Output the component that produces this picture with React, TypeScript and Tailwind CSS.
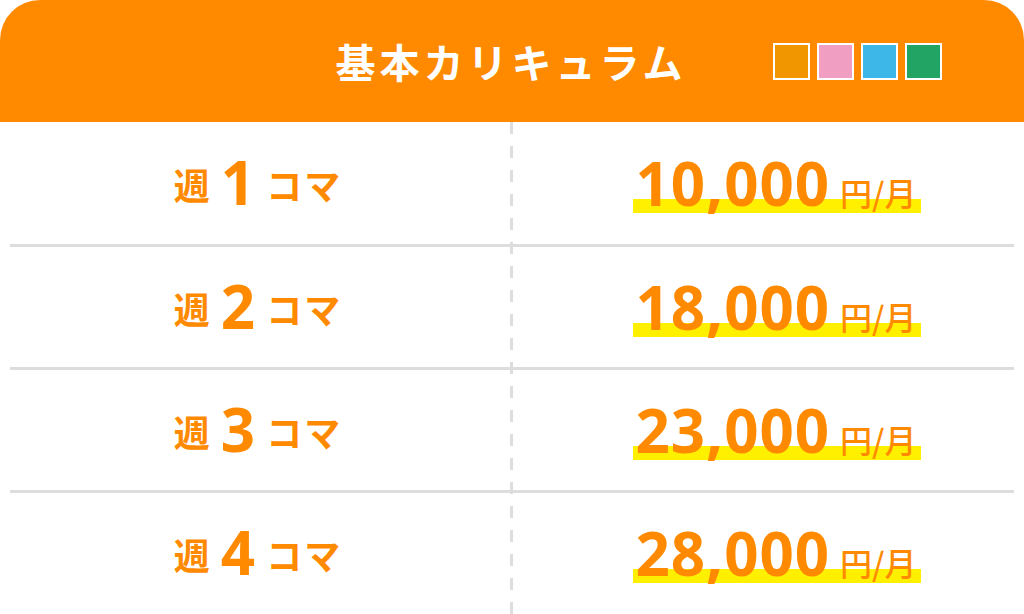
import React from 'react';

const plans = [
  { weeks: '1', price: '10,000' },
  { weeks: '2', price: '18,000' },
  { weeks: '3', price: '23,000' },
  { weeks: '4', price: '28,000' },
];

const swatches = ['bg-[#f29600]', 'bg-[#f09ec2]', 'bg-[#3db6e8]', 'bg-[#22a564]'];

const jp = "font-['Noto_Sans_CJK_JP',sans-serif]";
const num = "font-['Open_Sans','Noto_Sans_CJK_JP',sans-serif]";

export default function App() {
  return (
    <div className="w-[1024px] h-[614px] bg-white overflow-hidden relative">
      {/* Header */}
      <div className="h-[122px] bg-[#ff8a00] rounded-t-[40px] flex items-center relative">
        <h1 className={`${jp} w-full text-center text-white text-[40px] font-bold tracking-[4px] pr-[2px] leading-none`}>
          基本カリキュラム
        </h1>
        <div className="absolute right-[82px] top-[43px] flex gap-[7px]">
          {swatches.map((c) => (
            <span key={c} className={`w-[37px] h-[37px] border-[2px] border-white ${c}`} />
          ))}
        </div>
      </div>

      {/* Rows */}
      <div className="flex flex-col">
        {plans.map((p, i) => (
          <div key={p.weeks} className="flex flex-col">
            <div className={`flex ${i === 0 ? 'h-[122px]' : 'h-[120px]'}`}>
              <div className="w-1/2 flex items-center justify-center text-[#ff8a00] pt-[2px] pl-[4px]">
                <span className={`${jp} text-[36px] font-bold leading-none`}>週</span>
                <span className={`${num} text-[60px] font-bold leading-none mx-[11px] pb-[4px]`}>{p.weeks}</span>
                <span className={`${jp} text-[36px] font-bold leading-none tracking-[2px]`}>コマ</span>
              </div>
              <div className="w-1/2 flex items-center justify-center pl-[16px]">
                <div className="relative flex items-end text-[#ff8a00]">
                  <span className="absolute left-[-2px] right-[-4px] bottom-[0px] h-[14px] bg-[#fff000]" />
                  <span className={`${num} relative text-[60px] font-bold tracking-[1px] leading-none`}>{p.price}</span>
                  <span className={`${jp} relative text-[32px] font-medium leading-none ml-[10px] mb-[5px]`}>円/月</span>
                </div>
              </div>
            </div>
            {i < plans.length - 1 && <div className="mx-[10px] h-[3px] bg-[#dddddd]" />}
          </div>
        ))}
      </div>

      {/* Dashed column divider */}
      <div className="absolute left-[510px] top-[122px] bottom-0 w-[3px] bg-[repeating-linear-gradient(to_bottom,#dddddd_0_12px,transparent_12px_24px)]" />
    </div>
  );
}
